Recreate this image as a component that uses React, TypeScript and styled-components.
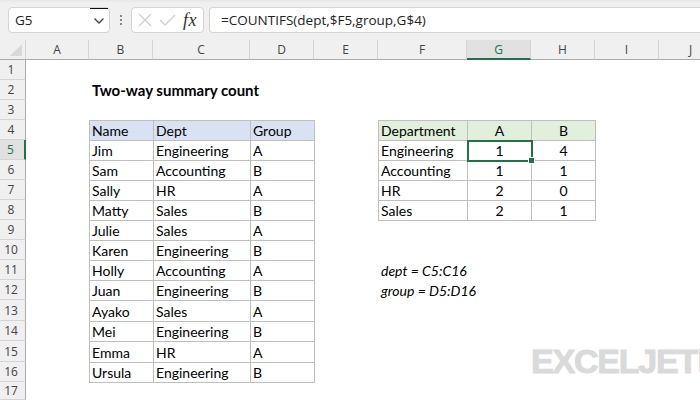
import React from "react";
import styled, { createGlobalStyle } from "styled-components";

const Global = createGlobalStyle`
  html, body { margin: 0; padding: 0; background: #fff; }
  #root { width: 700px; height: 400px; overflow: hidden; }
`;

const COLUMNS = ["A", "B", "C", "D", "E", "F", "G", "H", "I", "J"];
const ROW_HEIGHTS = [20, 20, 20, 20, 20, 20, 20, 20, 20, 20, 20, 20, 21, 20, 21, 20, 18];
const GREEN = "#217346";
const LINE = "#bfbfbf";

type CellSpec = {
  text?: string;
  fill?: string;
  boxed?: boolean;
  center?: boolean;
  bold?: boolean;
  italic?: boolean;
  selected?: boolean;
};

const cells: Record<string, CellSpec> = {
  B2: { text: "Two-way summary count", bold: true },
  F11: { text: "dept = C5:C16", italic: true },
  F12: { text: "group = D5:D16", italic: true },
};

const people = [
  ["Jim", "Engineering", "A"],
  ["Sam", "Accounting", "B"],
  ["Sally", "HR", "A"],
  ["Matty", "Sales", "B"],
  ["Julie", "Sales", "A"],
  ["Karen", "Engineering", "B"],
  ["Holly", "Accounting", "A"],
  ["Juan", "Engineering", "B"],
  ["Ayako", "Sales", "A"],
  ["Mei", "Engineering", "B"],
  ["Emma", "HR", "A"],
  ["Ursula", "Engineering", "B"],
];
["Name", "Dept", "Group"].forEach((text, i) => {
  cells[`${"BCD"[i]}4`] = { text, boxed: true, fill: "#d9e1f2" };
});
people.forEach((person, r) =>
  person.forEach((text, i) => {
    cells[`${"BCD"[i]}${r + 5}`] = { text, boxed: true };
  })
);
cells.F4 = { text: "Department", boxed: true, fill: "#e2efda" };
cells.G4 = { text: "A", boxed: true, fill: "#e2efda", center: true };
cells.H4 = { text: "B", boxed: true, fill: "#e2efda", center: true };
[
  ["Engineering", "1", "4"],
  ["Accounting", "1", "1"],
  ["HR", "2", "0"],
  ["Sales", "2", "1"],
].forEach(([dept, a, b], r) => {
  cells[`F${r + 5}`] = { text: dept, boxed: true };
  cells[`G${r + 5}`] = { text: a, boxed: true, center: true, selected: r === 0 };
  cells[`H${r + 5}`] = { text: b, boxed: true, center: true };
});

const Page = styled.div`
  position: relative;
  width: 700px;
  height: 400px;
  overflow: hidden;
  background: #fff;
`;

const Toolbar = styled.div`
  display: flex;
  align-items: flex-start;
  height: 40px;
  box-sizing: border-box;
  padding-top: 7px;
  padding-left: 8px;
  background: linear-gradient(#e6e6e6, #f0f0f0 3px);
`;

const FieldBox = styled.div`
  display: flex;
  align-items: center;
  box-sizing: border-box;
  height: 26px;
  background: #fff;
  border: 1px solid #d4d4d4;
  border-radius: 4px;
  font-family: "Open Sans", sans-serif;
  font-size: 13.5px;
  color: #222;
`;

const NameBox = styled(FieldBox)`
  position: relative;
  width: 102px;
  padding-left: 6px;
  justify-content: space-between;
`;

const NameArrow = styled.div`
  display: flex;
  align-items: center;
  justify-content: center;
  width: 18px;
  height: 24px;
  margin-right: 1px;
  border-top: 1px solid #111;
  box-sizing: border-box;
`;

const Dots = styled.div`
  display: flex;
  flex-direction: column;
  gap: 2px;
  width: 21px;
  height: 26px;
  align-items: center;
  justify-content: center;
`;

const Dot = styled.span`
  width: 2px;
  height: 2px;
  background: #8a8a8a;
`;

const FunctionBox = styled(FieldBox)`
  width: 73px;
  margin-right: 5px;
  padding-left: 6px;
  gap: 7px;
`;

const FxLabel = styled.span`
  font-family: "Liberation Serif", serif;
  font-style: italic;
  font-size: 18px;
  font-weight: 400;
  color: #333;
  letter-spacing: 0.5px;
`;

const FormulaBox = styled(FieldBox)`
  flex: 1;
  padding-left: 11px;
  border-right: none;
  border-radius: 4px 0 0 4px;
  white-space: nowrap;
`;

const Sheet = styled.div`
  display: grid;
  grid-template-columns: 26px 63px 64px 97px 64px 64px 89px 64px 64px 64px 64px;
  font-family: Lato, sans-serif;
`;

const Corner = styled.div`
  display: flex;
  align-items: flex-end;
  justify-content: flex-end;
  box-sizing: border-box;
  background: #f0f0f0;
  border-right: 1px solid #d4d4d4;
  border-bottom: 1px solid #ababab;
  padding: 0 3px 3px 0;
`;

const ColumnHead = styled.div<{ $active?: boolean }>`
  display: flex;
  align-items: center;
  justify-content: center;
  box-sizing: border-box;
  font-family: "Open Sans", sans-serif;
  font-size: 12px;
  color: ${(p) => (p.$active ? GREEN : "#444")};
  background: ${(p) => (p.$active ? "#e1e1e1" : "#f0f0f0")};
  border-right: 1px solid #d4d4d4;
  border-bottom: ${(p) => (p.$active ? `2px solid ${GREEN}` : "1px solid #ababab")};
`;

const RowHead = styled.div<{ $active?: boolean }>`
  display: flex;
  align-items: center;
  justify-content: center;
  box-sizing: border-box;
  padding-right: 3px;
  font-family: "Open Sans", sans-serif;
  font-size: 12px;
  color: ${(p) => (p.$active ? GREEN : "#444")};
  background: ${(p) => (p.$active ? "#e1e1e1" : "#f0f0f0")};
  border-right: ${(p) => (p.$active ? `2px solid ${GREEN}` : "1px solid #ababab")};
  border-bottom: 1px solid #d4d4d4;
`;

const Cell = styled.div<{
  $fill?: string;
  $boxed?: boolean;
  $center?: boolean;
  $bold?: boolean;
  $italic?: boolean;
}>`
  display: flex;
  align-items: center;
  justify-content: ${(p) => (p.$center ? "center" : "flex-start")};
  box-sizing: border-box;
  min-width: 0;
  padding-left: ${(p) => (p.$center ? "0" : p.$boxed ? "2px" : "3px")};
  white-space: nowrap;
  font-size: ${(p) => (p.$bold ? "15px" : "14px")};
  font-weight: ${(p) => (p.$bold ? 700 : 400)};
  font-style: ${(p) => (p.$italic ? "italic" : "normal")};
  color: #000;
  background: ${(p) => p.$fill ?? "transparent"};
  ${(p) => (p.$boxed ? `border: 1px solid ${LINE}; margin: 0 -1px -1px 0;` : "")}
`;

const SelectionAnchor = styled.div`
  position: relative;
  display: flex;
  flex: 1;
  align-self: stretch;
  align-items: center;
  justify-content: center;
`;

const SelectionFrame = styled.div`
  position: absolute;
  inset: -1px -2px -2px -1px;
  border: 2px solid ${GREEN};
`;

const FillHandle = styled.div`
  position: absolute;
  right: -4px;
  bottom: -4px;
  width: 5px;
  height: 5px;
  background: ${GREEN};
  border: 1px solid #fff;
`;

const Watermark = styled.div`
  position: absolute;
  left: 531px;
  top: 342px;
  display: flex;
  align-items: flex-start;
  gap: 2px;
`;

const WatermarkText = styled.span`
  font-family: "Liberation Sans", sans-serif;
  font-weight: 700;
  font-size: 34px;
  line-height: 38px;
  letter-spacing: -1.2px;
  color: #d9dada;
  -webkit-text-stroke: 1px #d9dada;
`;

const WatermarkMark = styled.svg`
  width: 22px;
  height: 24px;
  margin-top: 6px;
`;

export default function App() {
  const rows = ROW_HEIGHTS.map((h) => `${h}px`).join(" ");
  return (
    <Page>
      <Global />
      <Toolbar>
        <NameBox>
          G5
          <NameArrow>
            <svg width="12" height="8" viewBox="0 0 12 8" fill="none">
              <path d="M1.5 1.5 6 6l4.5-4.5" stroke="#444" strokeWidth="1.3" />
            </svg>
          </NameArrow>
        </NameBox>
        <Dots>
          <Dot />
          <Dot />
          <Dot />
        </Dots>
        <FunctionBox>
          <svg width="14" height="14" viewBox="0 0 14 14" fill="none">
            <path d="M1 1l12 12M13 1 1 13" stroke="#cfcfcf" strokeWidth="1.3" />
          </svg>
          <svg width="17" height="14" viewBox="0 0 17 14" fill="none">
            <path d="M1 7l5 5L16 2" stroke="#cfcfcf" strokeWidth="1.3" />
          </svg>
          <FxLabel>fx</FxLabel>
        </FunctionBox>
        <FormulaBox>=COUNTIFS(dept,$F5,group,G$4)</FormulaBox>
      </Toolbar>
      <Sheet style={{ gridTemplateRows: `20px ${rows}` }}>
        <Corner>
          <svg width="12" height="12" viewBox="0 0 12 12">
            <path d="M12 0v12H0z" fill="#d8d8d8" />
          </svg>
        </Corner>
        {COLUMNS.map((c) => (
          <ColumnHead key={c} $active={c === "G"}>
            {c}
          </ColumnHead>
        ))}
        {ROW_HEIGHTS.map((_, r) => (
          <React.Fragment key={r}>
            <RowHead $active={r + 1 === 5}>{r + 1}</RowHead>
            {COLUMNS.map((c) => {
              const spec = cells[`${c}${r + 1}`] ?? {};
              return (
                <Cell
                  key={c}
                  $fill={spec.fill}
                  $boxed={spec.boxed}
                  $center={spec.center}
                  $bold={spec.bold}
                  $italic={spec.italic}
                >
                  {spec.selected ? (
                    <SelectionAnchor>
                      {spec.text}
                      <SelectionFrame>
                        <FillHandle />
                      </SelectionFrame>
                    </SelectionAnchor>
                  ) : (
                    spec.text
                  )}
                </Cell>
              );
            })}
          </React.Fragment>
        ))}
      </Sheet>
      <Watermark>
        <WatermarkText>EXCELJET</WatermarkText>
        <WatermarkMark viewBox="0 0 22 24">
          <rect width="22" height="24" fill="#fbdcc4" />
          <path d="M4 12 17 4l-3 16-3-7z" fill="#fff" />
        </WatermarkMark>
      </Watermark>
    </Page>
  );
}
